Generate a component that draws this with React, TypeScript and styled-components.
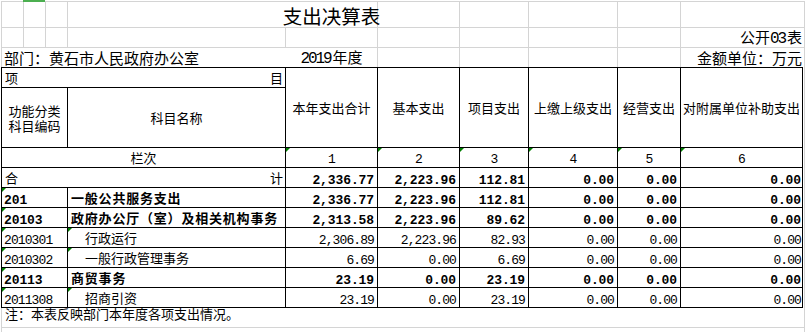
import React from "react";
import styled, { createGlobalStyle, css } from "styled-components";

const GRID = "#d4d4d4";
const FLAG = "#008000";

const GlobalStyle = createGlobalStyle`
  html, body {
    margin: 0;
    padding: 0;
    background: #fff;
  }
  body {
    font-family: "Noto Sans CJK SC", sans-serif;
    color: #000;
  }
`;

const Sheet = styled.div`
  width: 807px;
  height: 332px;
  overflow: hidden;
`;

const TopLine = styled.div`
  margin-left: 1px;
  width: 804px;
  height: 2px;
  background: linear-gradient(to bottom, transparent 1px, ${GRID} 1px);
  display: flex;
`;

const GreenMark = styled.div`
  margin-left: 22px;
  width: 22px;
  height: 2px;
  background: #4caf50;
`;

const UpperRow = styled.div<{ $h: number; $open?: boolean }>`
  display: flex;
  margin-left: 1px;
  width: 804px;
  height: ${(p) => p.$h}px;
  box-sizing: border-box;
  border-left: 1px solid ${GRID};
  border-bottom: ${(p) => (p.$open ? "none" : `1px solid ${GRID}`)};
`;

const UpperCell = styled.div<{ $w: number; $hide?: boolean; $justify?: string }>`
  flex: none;
  width: ${(p) => p.$w}px;
  box-sizing: border-box;
  border-right: 1px solid ${(p) => (p.$hide ? "transparent" : GRID)};
  display: flex;
  align-items: center;
  justify-content: ${(p) => p.$justify ?? "flex-start"};
  padding: 0 2px;
  font-size: 15px;
  line-height: 19px;
  white-space: nowrap;
`;

const Label = styled.span`
  white-space: nowrap;
`;

const Title = styled.span`
  align-self: flex-end;
  font-size: 19.5px;
  line-height: 22px;
`;

const Digits = styled.span`
  font-family: "Liberation Mono", monospace;
  font-size: 16px;
  letter-spacing: -2.1px;
  margin-right: 2px;
`;

const TableRow = styled.div`
  display: flex;
  margin-left: 1px;
`;

const Table = styled.div`
  display: grid;
  grid-template-columns: 65px 217px 91px 81px 68px 88px 62px 121px;
  grid-template-rows: 19px 59px 19px 19px repeat(6, 19px);
  gap: 1px;
  padding: 1px;
  background: #000;
`;

const Gutter = styled.div`
  width: 2px;
  box-sizing: border-box;
  border-right: 1px solid ${GRID};
`;

type CellProps = {
  $span?: number;
  $rows?: number;
  $justify?: string;
  $bold?: boolean;
  $padL?: number;
  $padR?: number;
  $flag?: boolean;
};

const Cell = styled.div<CellProps>`
  position: relative;
  background: #fff;
  grid-column: span ${(p) => p.$span ?? 1};
  grid-row: span ${(p) => p.$rows ?? 1};
  display: flex;
  align-items: center;
  justify-content: ${(p) => p.$justify ?? "flex-start"};
  padding: 0 ${(p) => p.$padR ?? 3}px 0 ${(p) => p.$padL ?? 3}px;
  font-size: 13px;
  line-height: 15px;
  white-space: nowrap;
  overflow: hidden;
  font-weight: ${(p) => (p.$bold ? 700 : 400)};
  letter-spacing: ${(p) => (p.$bold ? "0.8px" : "0")};
  text-align: center;
  ${(p) =>
    p.$flag &&
    css`
      &::before {
        content: "";
        position: absolute;
        top: 0;
        left: 0;
        border-top: 4px solid ${FLAG};
        border-right: 4px solid transparent;
      }
    `}
`;

/* mono digits sit higher than the CJK text, so push them down a little */
const NumCell = styled(Cell)<{ $drop?: number }>`
  font-family: "Liberation Mono", monospace;
  letter-spacing: ${(p) => (p.$bold ? "-0.1px" : "-0.9px")};
  padding-top: ${(p) => p.$drop ?? 5}px;
`;

const NoteRow = styled.div`
  margin-left: 1px;
  width: 804px;
  height: 20px;
  box-sizing: border-box;
  border-left: 1px solid ${GRID};
  border-right: 1px solid ${GRID};
  border-bottom: 1px solid ${GRID};
  padding-left: 3px;
  font-size: 13px;
  line-height: 12px;
`;

const Filler = styled.div`
  margin-left: 1px;
  width: 804px;
  height: 6px;
  box-sizing: border-box;
  border-left: 1px solid ${GRID};
  border-right: 1px solid ${GRID};
`;

const UPPER_COLS = [22, 22, 22, 218, 92, 82, 69, 89, 63, 124];

const HEADERS = [
  "本年支出合计",
  "基本支出",
  "项目支出",
  "上缴上级支出",
  "经营支出",
  "对附属单位补助支出",
];

type Row = { code: string; name: string; level: number; vals: string[] };

const TOTAL = ["2,336.77", "2,223.96", "112.81", "0.00", "0.00", "0.00"];

const ROWS: Row[] = [
  { code: "201", name: "一般公共服务支出", level: 1, vals: ["2,336.77", "2,223.96", "112.81", "0.00", "0.00", "0.00"] },
  { code: "20103", name: "政府办公厅（室）及相关机构事务", level: 2, vals: ["2,313.58", "2,223.96", "89.62", "0.00", "0.00", "0.00"] },
  { code: "2010301", name: "行政运行", level: 3, vals: ["2,306.89", "2,223.96", "82.93", "0.00", "0.00", "0.00"] },
  { code: "2010302", name: "一般行政管理事务", level: 3, vals: ["6.69", "0.00", "6.69", "0.00", "0.00", "0.00"] },
  { code: "20113", name: "商贸事务", level: 2, vals: ["23.19", "0.00", "23.19", "0.00", "0.00", "0.00"] },
  { code: "2011308", name: "招商引资", level: 3, vals: ["23.19", "0.00", "23.19", "0.00", "0.00", "0.00"] },
];

const numPad = (i: number) => (i === 5 ? 1 : 3);

const App = () => {
  return (
    <Sheet>
      <GlobalStyle />
      <TopLine>
        <GreenMark />
      </TopLine>

      <UpperRow $h={26}>
        {UPPER_COLS.map((w, i) => (
          <UpperCell key={i} $w={w} $hide={i === 3} $justify="center">
            {i === 4 && <Title>支出决算表</Title>}
          </UpperCell>
        ))}
      </UpperRow>

      <UpperRow $h={20}>
        {UPPER_COLS.map((w, i) => (
          <UpperCell key={i} $w={w} $justify="flex-end">
            {i === 9 && (
              <Label>
                公开<Digits>03</Digits>表
              </Label>
            )}
          </UpperCell>
        ))}
      </UpperRow>

      <UpperRow $h={19} $open>
        {UPPER_COLS.map((w, i) => (
          <UpperCell
            key={i}
            $w={w}
            $hide={i <= 3}
            $justify={i === 4 ? "center" : i === 9 ? "flex-end" : "flex-start"}
          >
            {i === 0 && "部门：黄石市人民政府办公室"}
            {i === 4 && (
              <Label>
                <Digits>2019</Digits>年度
              </Label>
            )}
            {i === 9 && "金额单位：万元"}
          </UpperCell>
        ))}
      </UpperRow>

      <TableRow>
        <Table>
          <Cell $span={2} $justify="space-between" $padR={2}>
            <span>项</span>
            <span>目</span>
          </Cell>
          {HEADERS.map((h) => (
            <Cell key={h} $rows={2} $justify="center" $padL={1} $padR={1}>
              {h}
            </Cell>
          ))}
          <Cell $justify="center">
            功能分类
            <br />
            科目编码
          </Cell>
          <Cell $justify="center">科目名称</Cell>

          <Cell $span={2} $justify="center">
            栏次
          </Cell>
          {HEADERS.map((h, i) => (
            <NumCell key={h} $justify="center" $flag $drop={3}>
              {i + 1}
            </NumCell>
          ))}

          <Cell $span={2} $justify="space-between" $padR={2}>
            <span>合</span>
            <span>计</span>
          </Cell>
          {TOTAL.map((v, i) => (
            <NumCell key={i} $bold $justify="flex-end" $padR={numPad(i)} $drop={6}>
              {v}
            </NumCell>
          ))}

          {ROWS.map((r) => (
            <React.Fragment key={r.code}>
              <NumCell $flag $bold={r.level < 3} $padL={2}>
                {r.code}
              </NumCell>
              <Cell $flag={r.level === 3} $bold={r.level < 3} $padL={r.level === 3 ? 17 : 3}>
                {r.name}
              </Cell>
              {r.vals.map((v, i) => (
                <NumCell key={i} $bold={r.level < 3} $justify="flex-end" $padR={numPad(i)}>
                  {v}
                </NumCell>
              ))}
            </React.Fragment>
          ))}
        </Table>
        <Gutter />
      </TableRow>

      <NoteRow>注：本表反映部门本年度各项支出情况。</NoteRow>
      <Filler />
    </Sheet>
  );
};

export default App;
